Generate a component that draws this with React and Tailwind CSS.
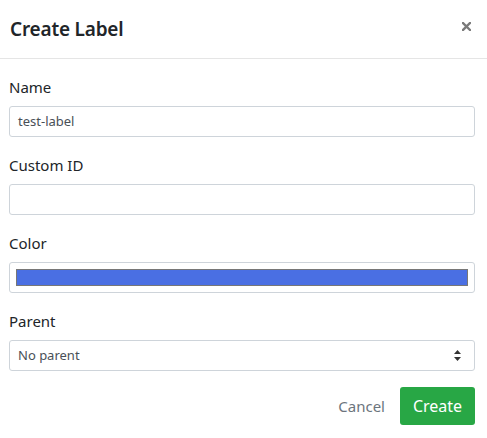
import React from 'react';

const Field = ({ label, children }) => (
  <div className="mb-[17px]">
    <div className="h-[22px] leading-[22px] text-[15px] text-[#212529] mb-[8px]">{label}</div>
    {children}
  </div>
);

const App = () => {
  return (
    <div className="w-[487px] h-[438px] bg-white font-['Noto_Sans',sans-serif]">
      <div className="h-[59px] px-[10px] flex items-center justify-between border-b border-[#e5e5e5]">
        <h1 className="text-[19px] font-semibold text-[#212529] tracking-[-0.2px]">Create Label</h1>
        <svg width="9" height="9" viewBox="0 0 9 9" className="mr-[6px] mb-[6px]">
          <path d="M1 1 L8 8 M8 1 L1 8" stroke="#7a7a7a" strokeWidth="2.4" strokeLinecap="square" />
        </svg>
      </div>

      <div className="pt-[17px] pl-[9px] pr-[12px]">
        <Field label="Name">
          <div className="h-[31px] border border-[#ced4da] rounded-[3px] px-[8px] flex items-center text-[13px] text-[#495057]">
            test-label
          </div>
        </Field>

        <Field label="Custom ID">
          <div className="h-[31px] border border-[#ced4da] rounded-[3px]"></div>
        </Field>

        <Field label="Color">
          <div className="h-[31px] border border-[#ced4da] rounded-[3px] px-[6px] py-[6px]">
            <div className="h-full bg-[#4a6fe3] border border-[#777]"></div>
          </div>
        </Field>

        <div>
          <div className="h-[22px] leading-[22px] text-[15px] text-[#212529] mb-[8px]">Parent</div>
          <div className="h-[31px] border border-[#ced4da] rounded-[3px] pl-[8px] pr-[13px] flex items-center justify-between text-[13px] text-[#495057]">
            <span>No parent</span>
            <svg width="7" height="11" viewBox="0 0 7 11">
              <path d="M3.5 0 L7 4 L0 4 Z M3.5 11 L7 7 L0 7 Z" fill="#333" />
            </svg>
          </div>
        </div>

        <div className="flex justify-end items-center mt-[16px]">
          <button className="text-[15px] text-[#6c757d] mr-[15px]">Cancel</button>
          <button className="w-[75px] h-[38px] rounded-[3px] bg-[#28a745] text-white text-[16px]">Create</button>
        </div>
      </div>
    </div>
  );
};

export default App;
